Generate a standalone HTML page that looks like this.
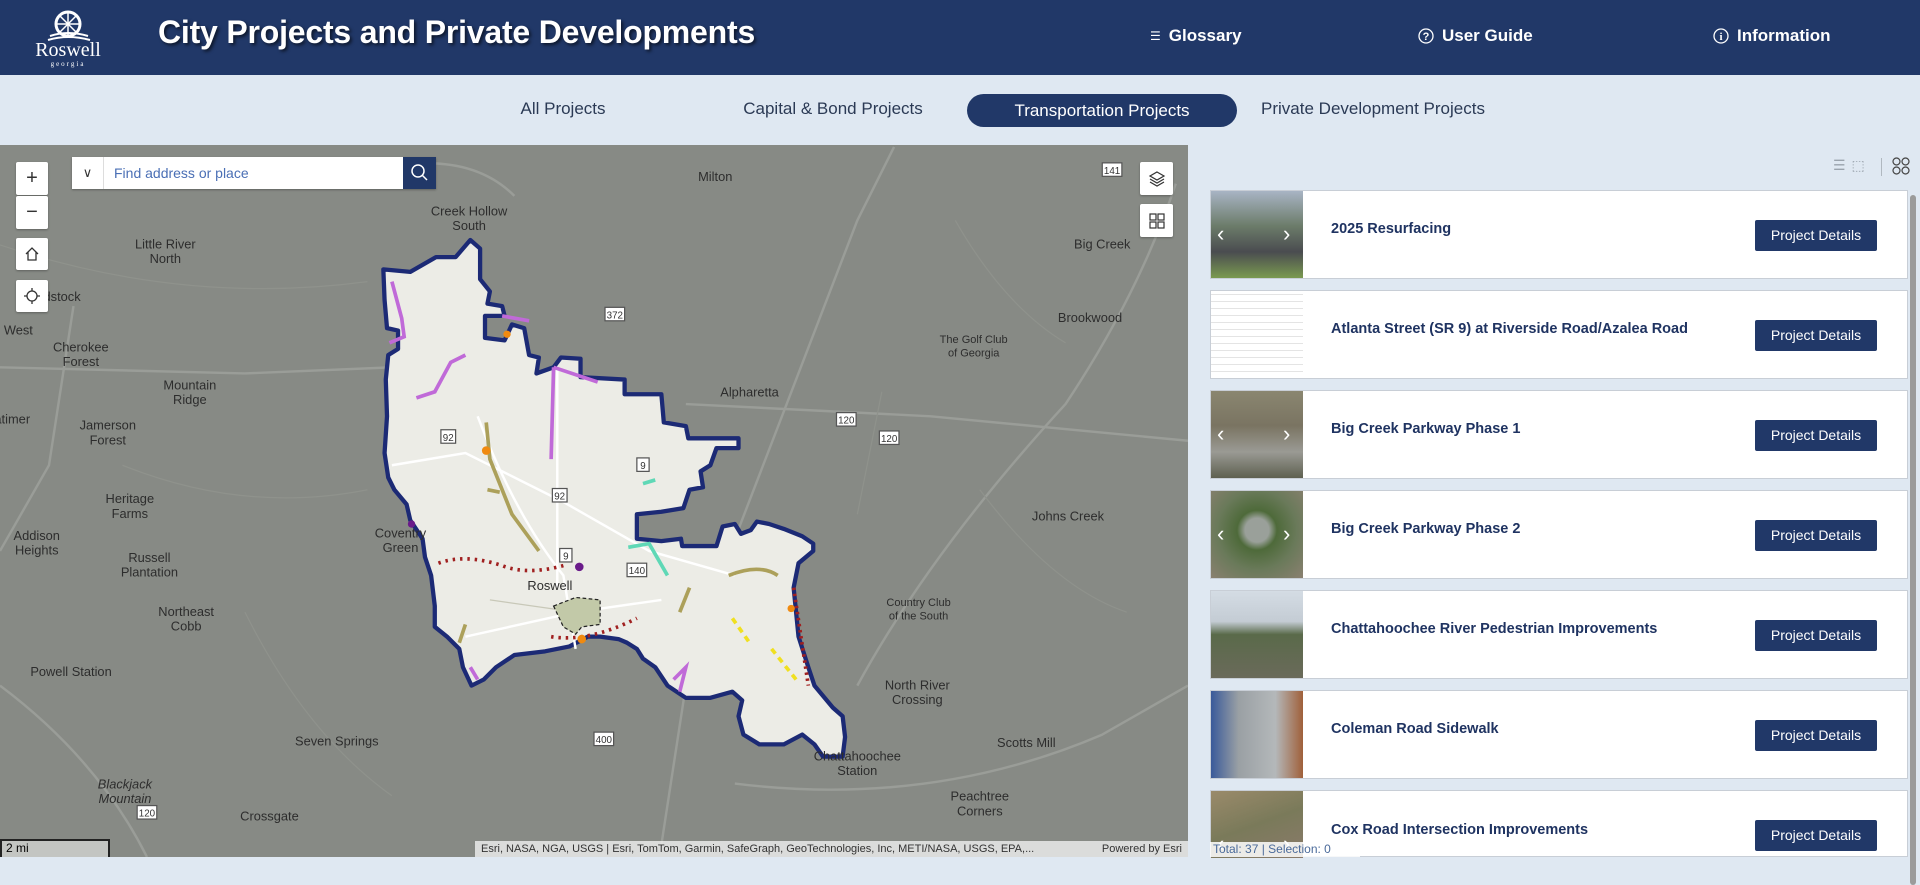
<!DOCTYPE html>
<html><head><meta charset="utf-8"><style>
*{margin:0;padding:0;box-sizing:border-box}
body{width:1920px;height:857px;overflow:hidden;font-family:"Liberation Sans",sans-serif;background:#dfe8f2;position:relative}
.hdr{position:absolute;left:0;top:0;width:1920px;height:75px;background:#213868}
.title{position:absolute;left:158px;top:14px;color:#fff;font-size:32px;font-weight:bold;text-shadow:2px 2px 3px rgba(0,0,0,.6);letter-spacing:-.2px}
.hl{position:absolute;top:26px;color:#fff;font-size:17px;font-weight:bold;display:flex;align-items:center;gap:8px}
.tabs{position:absolute;left:0;top:75px;width:1920px;height:70px;background:#dfe8f2}
.tab{position:absolute;top:24px;font-size:17px;color:#2b3a55;transform:translateX(-50%)}
.pill{position:absolute;left:967px;top:94px;width:270px;height:33px;border-radius:17px;background:#213868;color:#fff;font-size:17px;text-align:center;line-height:33px}
.map{position:absolute;left:0;top:145px;width:1188px;height:712px;background:#878a85;overflow:hidden}
.btn{position:absolute;background:#fff;border-radius:2px;box-shadow:0 1px 2px rgba(0,0,0,.3);display:flex;align-items:center;justify-content:center;color:#333;font-size:20px}
.panel{position:absolute;left:1200px;top:145px;width:720px;height:712px;background:#dfe8f2}
.card{position:absolute;left:1210px;width:698px;height:89px;background:#fff;border:1px solid #c8ced6}
.thumb{position:absolute;left:0;top:0;width:92px;height:87px}
.ct{position:absolute;left:120px;top:30px;font-size:14.5px;font-weight:bold;color:#1f3361}
.pd{position:absolute;left:544px;top:29px;width:122px;height:31px;background:#213868;color:#fff;font-size:14px;text-align:center;line-height:31px;border-radius:2px}
.arr{position:absolute;top:30px;color:#fff;font-size:22px;font-weight:100}
</style></head><body>
<div class="hdr">
 <svg style="position:absolute;left:30px;top:6px" width="80" height="62" viewBox="0 0 80 62">
  <circle cx="38" cy="18" r="12" fill="none" stroke="#fff" stroke-width="3"/>
  <g stroke="#fff" stroke-width="1.5"><line x1="38" y1="6" x2="38" y2="30"/><line x1="26" y1="18" x2="50" y2="18"/><line x1="30" y1="10" x2="46" y2="26"/><line x1="46" y1="10" x2="30" y2="26"/></g>
  <path d="M20 30 Q38 24 58 30 M18 34 Q38 28 60 34" stroke="#fff" stroke-width="2" fill="none"/>
  <text x="38" y="50" fill="#fff" font-family="Liberation Serif,serif" font-size="20" text-anchor="middle">Roswell</text>
  <text x="38" y="60" fill="#fff" font-family="Liberation Serif,serif" font-size="7" letter-spacing="2" text-anchor="middle">georgia</text>
 </svg>
 <div class="title">City Projects and Private Developments</div>
 <div class="hl" style="left:1150px"><span style="font-size:12px;font-weight:normal">☰</span>Glossary</div>
 <div class="hl" style="left:1418px"><svg width="16" height="16"><circle cx="8" cy="8" r="7" fill="none" stroke="#fff" stroke-width="1.3"/><text x="8" y="12" fill="#fff" font-size="11" text-anchor="middle" font-family="Liberation Sans">?</text></svg>User Guide</div>
 <div class="hl" style="left:1713px"><svg width="16" height="16"><circle cx="8" cy="8" r="7" fill="none" stroke="#fff" stroke-width="1.3"/><text x="8" y="12" fill="#fff" font-size="11" text-anchor="middle" font-family="Liberation Serif">i</text></svg>Information</div>
</div>
<div class="tabs">
 <div class="tab" style="left:563px">All Projects</div>
 <div class="tab" style="left:833px">Capital &amp; Bond Projects</div>
 <div class="tab" style="left:1373px">Private Development Projects</div>
</div>
<div class="pill">Transportation Projects</div>

<div class="map">
<svg width="1188" height="712" viewBox="0 118.4 970 581.6" preserveAspectRatio="none" style="position:absolute;left:0;top:0">
 <rect x="0" y="118" width="970" height="582" fill="#878a85"/>
 <g stroke="#9a9d98" stroke-width="2" fill="none">
  <path d="M0 300 L200 305 L320 300"/><path d="M560 330 L760 340 L970 360"/><path d="M700 560 Q760 450 870 330 Q930 240 960 150"/>
  <path d="M540 690 L560 560 L600 440 L700 180 L730 120"/><path d="M0 560 Q80 620 120 700"/><path d="M0 450 L40 380 L60 250"/>
  <path d="M600 640 Q760 660 900 600 L970 560"/><path d="M300 140 Q380 120 420 160"/>
 </g>
 <g stroke="#8f928c" stroke-width="1" fill="none">
  <path d="M0 200 Q150 250 300 230"/><path d="M100 380 Q200 420 300 400"/><path d="M780 180 Q820 250 870 280"/><path d="M800 400 Q860 480 920 500"/><path d="M200 500 Q250 600 320 650"/><path d="M700 420 L720 320"/>
 </g>
 <polygon fill="#ecece6" stroke="#1c2a75" stroke-width="3.5" stroke-linejoin="round" points="313,220 335,222 356,210 372,210 384,196 392,203 392,228 400,238 398,248 410,250 412,258 396,258 396,276 412,278 418,265 428,268 432,290 440,292 438,305 452,300 458,292 474,293 474,308 510,310 510,322 540,322 542,345 560,348 562,358 603,358 603,366 585,366 580,380 572,385 574,398 563,400 558,415 540,418 520,420 520,440 540,442 556,440 557,446 585,446 590,430 600,428 605,436 613,433 618,426 628,428 640,432 655,438 664,444 664,450 658,455 652,460 648,480 652,520 660,545 665,560 680,578 688,585 690,602 688,618 672,618 665,608 655,600 640,608 620,608 607,600 603,585 606,572 598,565 580,570 560,570 545,560 535,545 525,538 520,530 512,525 505,522 490,520 480,520 465,528 445,532 420,535 405,545 395,555 385,560 378,545 375,530 365,520 355,512 355,495 352,470 347,455 345,440 335,425 332,412 322,400 317,390 314,370 316,340 315,310 317,290 325,285 325,270 316,268 314,245"/>
 <g stroke="#fff" stroke-width="2" fill="none"><path d="M320 380 L380 370 L460 410 L530 450 L600 470"/><path d="M390 340 Q420 420 460 470 L470 530"/><path d="M455 300 L455 480"/><path d="M380 520 L470 500 L540 490"/></g>
 <path d="M400 490 L470 500" stroke="#c8c8b8" stroke-width="1"/>
 <polygon points="452,495 470,488 490,490 490,510 475,512 470,518 460,512" fill="#c2c9a8" stroke="#222" stroke-dasharray="3,2"/>
 <g fill="none" stroke-width="3">
  <path d="M320 230 L328 260 L330 275 L318 280" stroke="#c06ad8"/><path d="M340 325 L355 320 L368 296 L380 290" stroke="#c06ad8"/>
  <path d="M410 258 L432 262" stroke="#c06ad8"/><path d="M452 300 L450 375 M452 300 L488 312" stroke="#c06ad8"/>
  <path d="M397 345 L400 375 L418 420 L440 450" stroke="#aca05a"/><path d="M398 400 L408 402" stroke="#aca05a"/>
  <path d="M525 395 L535 392" stroke="#5fd8b6"/><path d="M513 447 L530 444 L545 470" stroke="#5fd8b6"/>
  <path d="M595 470 Q620 460 635 470" stroke="#aca05a"/><path d="M563 480 L555 500" stroke="#aca05a"/><path d="M380 510 L375 525" stroke="#aca05a"/>
  <path d="M598 505 L612 525 M630 530 L650 555" stroke="#f0e020" stroke-dasharray="5,4"/>
  <path d="M358 460 Q380 452 410 462 Q430 470 460 462" stroke="#a02020" stroke-dasharray="2,4"/>
  <path d="M450 520 Q480 525 520 505" stroke="#a02020" stroke-dasharray="2,4"/><path d="M648 480 L660 560" stroke="#a02020" stroke-dasharray="2,3"/>
  <path d="M550 555 L560 545 L555 565" stroke="#c06ad8"/><path d="M384 545 L390 555" stroke="#c06ad8"/>
 </g>
 <g fill="#f08a10"><circle cx="397" cy="368" r="3.5"/><circle cx="475" cy="522" r="3.5"/><circle cx="646" cy="497" r="3"/><circle cx="414" cy="273" r="3"/></g>
 <g fill="#6a1b8a"><circle cx="473" cy="463" r="3.5"/><circle cx="336" cy="428" r="3"/></g>
 <g font-family="Liberation Sans,sans-serif" font-size="10.5" fill="#2d2d2d" text-anchor="middle">
  <text x="383" y="176">Creek Hollow</text><text x="383" y="188">South</text><text x="584" y="148">Milton</text>
  <text x="135" y="203">Little River</text><text x="135" y="215">North</text><text x="40" y="246">Woodstock</text><text x="15" y="273">West</text>
  <text x="66" y="287">Cherokee</text><text x="66" y="299">Forest</text><text x="155" y="318">Mountain</text><text x="155" y="330">Ridge</text>
  <text x="88" y="351">Jamerson</text><text x="88" y="363">Forest</text><text x="10" y="346">atimer</text>
  <text x="106" y="411">Heritage</text><text x="106" y="423">Farms</text><text x="30" y="441">Addison</text><text x="30" y="453">Heights</text>
  <text x="122" y="459">Russell</text><text x="122" y="471">Plantation</text><text x="152" y="503">Northeast</text><text x="152" y="515">Cobb</text>
  <text x="58" y="552">Powell Station</text><text x="275" y="609">Seven Springs</text><text x="220" y="670">Crossgate</text>
  <text x="327" y="439">Coventry</text><text x="327" y="451">Green</text><text x="449" y="482">Roswell</text>
  <text x="900" y="203">Big Creek</text><text x="890" y="263">Brookwood</text><text x="612" y="324">Alpharetta</text>
  <text x="872" y="425">Johns Creek</text><text x="749" y="563">North River</text><text x="749" y="575">Crossing</text>
  <text x="838" y="610">Scotts Mill</text><text x="800" y="654">Peachtree</text><text x="800" y="666">Corners</text>
  <text x="700" y="621">Chattahoochee</text><text x="700" y="633">Station</text>
  <text x="750" y="495" font-size="9">Country Club</text><text x="750" y="506" font-size="9">of the South</text>
  <text x="795" y="280" font-size="9">The Golf Club</text><text x="795" y="291" font-size="9">of Georgia</text>
  <text x="102" y="644" font-style="italic">Blackjack</text><text x="102" y="656" font-style="italic">Mountain</text>
 </g>
 <g font-family="Liberation Sans,sans-serif" font-size="8" fill="#333" text-anchor="middle">
  <rect x="360" y="351" width="12" height="11" fill="#fff" stroke="#555"/><text x="366" y="360">92</text>
  <rect x="451" y="399" width="12" height="11" fill="#fff" stroke="#555"/><text x="457" y="408">92</text>
  <rect x="520" y="374" width="10" height="11" fill="#fff" stroke="#555"/><text x="525" y="383">9</text>
  <rect x="457" y="448" width="10" height="11" fill="#fff" stroke="#555"/><text x="462" y="457">9</text>
  <rect x="512" y="460" width="16" height="11" fill="#fff" stroke="#555"/><text x="520" y="469">140</text>
  <rect x="494" y="251" width="16" height="11" fill="#fff" stroke="#555"/><text x="502" y="260">372</text>
  <rect x="900" y="133" width="16" height="11" fill="#fff" stroke="#555"/><text x="908" y="142">141</text>
  <rect x="683" y="337" width="16" height="11" fill="#fff" stroke="#555"/><text x="691" y="346">120</text>
  <rect x="718" y="352" width="16" height="11" fill="#fff" stroke="#555"/><text x="726" y="361">120</text>
  <rect x="485" y="598" width="16" height="11" fill="#fff" stroke="#555"/><text x="493" y="607">400</text>
  <rect x="112" y="658" width="16" height="11" fill="#fff" stroke="#555"/><text x="120" y="667">120</text>
 </g>
</svg>
 <div class="btn" style="left:16px;top:17px;width:32px;height:33px">+</div>
 <div class="btn" style="left:16px;top:51px;width:32px;height:33px">−</div>
 <div class="btn" style="left:16px;top:93px;width:32px;height:32px"><svg width="16" height="16"><path d="M2 8 L8 2 L14 8 M4 6 V14 H12 V6" fill="none" stroke="#333" stroke-width="1.3"/></svg></div>
 <div class="btn" style="left:16px;top:135px;width:32px;height:32px"><svg width="18" height="18"><circle cx="9" cy="9" r="5" fill="none" stroke="#333" stroke-width="1.3"/><path d="M9 1V4M9 14V17M1 9H4M14 9H17" stroke="#333" stroke-width="1.3"/></svg></div>
 <div style="position:absolute;left:72px;top:12px;width:364px;height:32px;background:#fff;box-shadow:0 1px 2px rgba(0,0,0,.3)">
  <div style="position:absolute;left:0;top:0;width:32px;height:32px;border-right:1px solid #ddd;text-align:center;line-height:32px;font-size:13px;color:#333">&#x2228;</div>
  <div style="position:absolute;left:42px;top:8px;font-size:14px;color:#4a6fb5">Find address or place</div>
  <div style="position:absolute;right:0;top:0;width:33px;height:32px;background:#213868"><svg width="33" height="32"><circle cx="15" cy="14" r="6" fill="none" stroke="#fff" stroke-width="1.5"/><path d="M19 18 L24 23" stroke="#fff" stroke-width="1.5"/></svg></div>
 </div>
 <div class="btn" style="left:1140px;top:17px;width:33px;height:33px"><svg width="18" height="18"><path d="M9 2 L16 6 L9 10 L2 6 Z M2 9 L9 13 L16 9 M2 12 L9 16 L16 12" fill="none" stroke="#333" stroke-width="1.2"/></svg></div>
 <div class="btn" style="left:1140px;top:59px;width:33px;height:33px"><svg width="18" height="18" fill="none" stroke="#333" stroke-width="1.2"><rect x="2" y="2" width="6" height="6"/><rect x="10" y="2" width="6" height="6"/><rect x="2" y="10" width="6" height="6"/><rect x="10" y="10" width="6" height="6"/></svg></div>
 <div style="position:absolute;left:0;top:694px;width:110px;height:18px;border:2px solid #222;border-bottom:none;background:rgba(255,255,255,.5);font-size:12px;padding-left:4px">2 mi</div>
 <div style="position:absolute;left:475px;top:696px;width:713px;height:16px;background:rgba(255,255,255,.7);font-size:11px;color:#333;line-height:16px;padding-left:6px;white-space:nowrap;overflow:hidden">Esri, NASA, NGA, USGS | Esri, TomTom, Garmin, SafeGraph, GeoTechnologies, Inc, METI/NASA, USGS, EPA,... <span style="position:absolute;right:6px">Powered by Esri</span></div>
</div>

<div class="panel">
 <div style="position:absolute;left:633px;top:12px;color:#9aa3ad;font-size:14px;letter-spacing:6px">☰⬚</div>
 <div style="position:absolute;left:681px;top:13px;width:1px;height:18px;background:#b0b8c0"></div>
 <svg style="position:absolute;left:692px;top:12px" width="18" height="18" fill="none" stroke="#444" stroke-width="1.2"><circle cx="4.5" cy="4.5" r="3.5"/><circle cx="13.5" cy="4.5" r="3.5"/><circle cx="4.5" cy="13.5" r="3.5"/><circle cx="13.5" cy="13.5" r="3.5"/></svg>
 <div style="position:absolute;left:710px;top:50px;width:6px;height:690px;background:#9b9b9b;border-radius:3px"></div>
</div>

<div class="card" style="top:190px"><div class="thumb" style="background:linear-gradient(180deg,#a8b4c4 0%,#6c7c6a 40%,#4a4c50 70%,#7a9a50 100%)"></div><span class="arr" style="left:6px">‹</span><span class="arr" style="left:72px">›</span><div class="ct">2025 Resurfacing</div><div class="pd">Project Details</div></div>
<div class="card" style="top:290px"><div class="thumb" style="background:repeating-linear-gradient(0deg,#fff 0 6px,#e4e4e4 6px 7px)"></div><div class="ct">Atlanta Street (SR 9) at Riverside Road/Azalea Road</div><div class="pd">Project Details</div></div>
<div class="card" style="top:390px"><div class="thumb" style="background:linear-gradient(180deg,#8a8670 0%,#7a7462 40%,#9a9a94 70%,#5e6050 100%)"></div><span class="arr" style="left:6px">‹</span><span class="arr" style="left:72px">›</span><div class="ct">Big Creek Parkway Phase 1</div><div class="pd">Project Details</div></div>
<div class="card" style="top:490px"><div class="thumb" style="background:radial-gradient(circle at 50% 45%,#9aa09a 0 18%,#4e6a3a 30%,#6a7a5a 60%,#8a8070 100%)"></div><span class="arr" style="left:6px">‹</span><span class="arr" style="left:72px">›</span><div class="ct">Big Creek Parkway Phase 2</div><div class="pd">Project Details</div></div>
<div class="card" style="top:590px"><div class="thumb" style="background:linear-gradient(180deg,#d4dce4 0%,#c4ccd4 35%,#5a6a4a 50%,#6a6a5a 100%)"></div><div class="ct">Chattahoochee River Pedestrian Improvements</div><div class="pd">Project Details</div></div>
<div class="card" style="top:690px"><div class="thumb" style="background:linear-gradient(90deg,#3a5a9a 0%,#9aa0a4 30%,#b4b8ba 70%,#a0603a 100%)"></div><div class="ct">Coleman Road Sidewalk</div><div class="pd">Project Details</div></div>
<div class="card" style="top:790px;height:67px"><div class="thumb" style="height:67px;background:linear-gradient(160deg,#9a8a6a,#7a7a5a 50%,#8a7a6a)"></div><span class="arr" style="left:6px;top:40px">‹</span><span class="arr" style="left:72px;top:40px">›</span><div class="ct" style="top:31px">Cox Road Intersection Improvements</div><div class="pd">Project Details</div></div>
<div style="position:absolute;left:1210px;top:842px;width:150px;height:15px;background:rgba(255,255,255,.85);font-size:12px;color:#4a6a9a;padding-left:3px">Total: 37 | Selection: 0</div>
</body></html>
